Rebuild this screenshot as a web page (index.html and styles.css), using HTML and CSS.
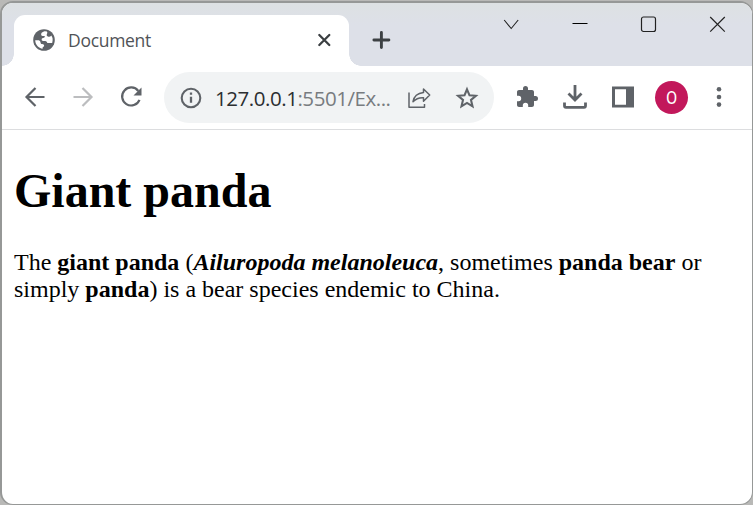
FILE: index.html
```html
<!DOCTYPE html>
<html lang="en">
<head>
<meta charset="utf-8">
<title>Document</title>
<link rel="stylesheet" href="styles.css">
</head>
<body>
<div class="window">
  <header class="titlebar">
    <div class="tab">
      <svg class="globe" width="22" height="22" viewBox="0 0 22 22"><circle cx="11" cy="11" r="10.800" fill="#5f6368"/><path fill="#fff" d="M11.500 2.200C9 2.800 7.500 4.500 8.300 6.300c.5 1 1.900.7 3.500.8 0 1.300-.4 1.800-1.700 1.900-1.100.1-1.600.7-1.400 2 .2.900 1 1 2.300 1 2.200 0 3 .5 3.300 1.900h4.900c.9-3.200.5-5.600-.9-7.300-.9 1.100-2 1.500-3.400 1-1.500-.6-1.400-1.800-.8-3 .4-.8.200-1.500-.2-2.200a9 9 0 0 0-2.400-.2zM2.200 11.300C2.400 15.800 5.500 19.200 9.700 19.800c-.3-1.300.1-2.100 1.300-2.300.4-1.600-.2-2.300-2-2.400-1.200-.1-1.300-.9-1.500-1.900-.3-1.400-1.300-1.900-2.700-1.900z"/></svg>
      <span class="tab-title">Document</span>
      <svg class="tab-close" width="14" height="14" viewBox="0 0 14 14"><path d="M2.300 2l10 10M12.300 2l-10 10" stroke="#3c4043" stroke-width="2.300" stroke-linecap="round"/></svg>
    </div>
    <div class="new-tab"><svg width="20" height="20" viewBox="0 0 20 20"><path d="M10.400 2.500v15M2.900 10h15" stroke="#3c4043" stroke-width="2.900" stroke-linecap="round"/></svg></div>
    <div class="controls">
      <span><svg width="17" height="17" viewBox="0 0 17 17"><path d="M1.200 4l7 8.500 7-8.500" fill="none" stroke="#222" stroke-width="1.100"/></svg></span>
      <span><svg width="17" height="17" viewBox="0 0 17 17"><path d="M.5 7.500h15" stroke="#000" stroke-width="1.200"/></svg></span>
      <span><svg width="17" height="17" viewBox="0 0 17 17"><rect x="1.500" y="1" width="14" height="14.500" rx="2" fill="none" stroke="#222" stroke-width="1.200"/></svg></span>
      <span><svg width="17" height="17" viewBox="0 0 17 17"><path d="M1.200 1l14.600 14.600M15.800 1L1.200 15.600" stroke="#222" stroke-width="1.200"/></svg></span>
    </div>
  </header>
  <nav class="toolbar">
    <span class="cell"><svg width="24" height="24" viewBox="0 0 24 24"><path d="M21.500 12H4M12.500 3l-9 9 9 9" fill="none" stroke="#5f6368" stroke-width="2.200"/></svg></span>
    <span class="cell"><svg width="24" height="24" viewBox="0 0 24 24"><path d="M2.500 12H20M11.500 3l9 9-9 9" fill="none" stroke="#bcbdbf" stroke-width="2.200"/></svg></span>
    <span class="cell"><svg width="24" height="24" viewBox="0 0 24 24"><path d="M19.300 6A9 9 0 1 0 20.500 14.800" fill="none" stroke="#5f6368" stroke-width="2.200"/><path d="M22.500 2.500v8h-8z" fill="#5f6368"/></svg></span>
    <div class="omnibox">
      <svg class="info" width="22" height="22" viewBox="0 0 22 22"><circle cx="11" cy="11" r="9.300" fill="none" stroke="#5f6368" stroke-width="2.100"/><path d="M11 5.500v2.300M11 9.700v6" stroke="#5f6368" stroke-width="2.300"/></svg>
      <span class="url"><b>127.0.0.1</b>:5501/Ex...</span>
      <span class="cell"><svg width="24" height="24" viewBox="0 0 24 24"><path d="M2 6.500v14.700h15.500V18M16.500 3l6.200 6-6.200 6.200v-3.500c-4.500-.3-7.500.8-10.500 4 .8-4.700 4-8.500 10.500-9.200z" fill="none" stroke="#5f6368" stroke-width="1.500" stroke-linejoin="round"/></svg></span>
      <span class="cell"><svg width="24" height="24" viewBox="0 0 24 24"><path d="M12 3.300l2.500 6 6.400.5-4.900 4.200 1.500 6.300-5.500-3.400-5.500 3.400L8 14 3.100 9.800l6.400-.5z" fill="none" stroke="#5f6368" stroke-width="2.100"/></svg></span>
    </div>
    <span class="cell first-action"><svg width="24" height="24" viewBox="0 0 24 24"><path fill="#5f6368" d="M20.500 11H19V7c0-1.100-.9-2-2-2h-4V3.500a2.500 2.500 0 0 0-5 0V5H4c-1.100 0-2 .9-2 2v3.800h1.500a2.700 2.700 0 0 1 0 5.400H2V20c0 1.100.9 2 2 2h3.800v-1.500a2.700 2.700 0 0 1 5.400 0V22H17c1.100 0 2-.9 2-2v-4h1.500a2.500 2.500 0 0 0 0-5z"/></svg></span>
    <span class="cell"><svg width="26" height="26" viewBox="0 0 26 26"><path d="M13 1v15M6.500 9.500L13 16l6.500-6.500M2.500 18.500v3.300a1.500 1.500 0 0 0 1.500 1.500h18a1.500 1.500 0 0 0 1.500-1.500v-3.300" fill="none" stroke="#5f6368" stroke-width="2.800"/></svg></span>
    <span class="cell"><svg width="22" height="22" viewBox="0 0 22 22"><path fill="#5f6368" fill-rule="evenodd" d="M0 .5h22v21H0zM3 3.300v15.400h11V3.300z"/></svg></span>
    <span class="cell"><span class="avatar"><span class="initial">O</span></span></span>
    <span class="cell"><svg width="6" height="22" viewBox="0 0 6 22"><g fill="#5f6368"><circle cx="3" cy="3.300" r="2.300"/><circle cx="3" cy="11" r="2.300"/><circle cx="3" cy="18.600" r="2.300"/></g></svg></span>
  </nav>
  <main class="page">
    <h1>Giant panda</h1>
    <p>The <strong>giant panda</strong> (<strong><em>Ailuropoda melanoleuca</em></strong>, sometimes <strong>panda bear</strong> or simply <strong>panda</strong>) is a bear species endemic to China.</p>
  </main>
</div>
</body>
</html>
```
FILE: styles.css
```css
* { box-sizing: border-box; }
html { background: #b9b9b7; }
body { margin: 0; height: 505px; padding: 1px 0 0 0; overflow: hidden; }
svg { display: block; flex: none; }
.window {
  height: 504px;
  border: 2px solid #969897;
  border-right-width: 1px;
  border-bottom-width: 1px;
  border-radius: 13px;
  background: #fff;
  overflow: hidden;
}
.titlebar {
  display: flex;
  height: 63px;
  padding-left: 12px;
  background: linear-gradient(#dde1e3, #dde0e8 35%, #dde0e8);
  font-family: "Open Sans", sans-serif;
}
.tab {
  position: relative;
  display: flex;
  align-items: center;
  width: 335px;
  height: 51px;
  margin-top: 12px;
  padding: 0 18px 2px 19px;
  border-radius: 11px 11px 0 0;
  background: #fff;
}
.tab::before, .tab::after {
  content: "";
  position: absolute;
  bottom: 0;
  width: 12px;
  height: 12px;
}
.tab::before { left: -12px; background: radial-gradient(circle at 0 0, transparent 11.500px, #fff 12px); }
.tab::after { right: -12px; background: radial-gradient(circle at 100% 0, transparent 11.500px, #fff 12px); }
.tab-title {
  flex: 1;
  margin-left: 13px;
  font-size: 17.500px;
  line-height: 22px;
  letter-spacing: -0.300px;
  color: #505357;
}
.new-tab { display: flex; align-items: center; margin: 12px 0 2px 22px; }
.controls { display: flex; margin-left: auto; height: 42px; }
.controls span { display: flex; align-items: center; justify-content: center; width: 68.700px; }
.toolbar {
  display: flex;
  align-items: center;
  height: 64px;
  padding: 0 0 1px 9px;
  border-bottom: 1px solid #dcdddf;
  font-family: "Open Sans", sans-serif;
}
.cell { display: flex; flex: none; align-items: center; justify-content: center; width: 48px; }
.omnibox {
  display: flex;
  flex: none;
  align-items: center;
  width: 330px;
  height: 51px;
  margin-left: 9px;
  padding: 1px 3px 0 16px;
  border-radius: 26px;
  background: #f1f3f4;
}
.url { flex: 1; margin-left: 13px; font-size: 20.500px; line-height: 26px; letter-spacing: -0.450px; color: #787c80; white-space: nowrap; }
.url b { font-weight: 400; color: #2b2e31; }
.first-action { margin-left: 9px; }
.avatar {
  width: 33px;
  height: 33px;
  border-radius: 50%;
  background: #c2185b;
  color: #fff;
  font: 18.500px/34px Roboto, sans-serif;
  text-align: center;
}
.initial { display: block; transform: scaleX(0.88); }
.page { padding: 0 12px; font: 24px/27px "Liberation Serif", serif; color: #000; }
h1 { margin: 33px 0 31px; font-size: 48px; line-height: 55px; }
p { margin: 0; }
```
